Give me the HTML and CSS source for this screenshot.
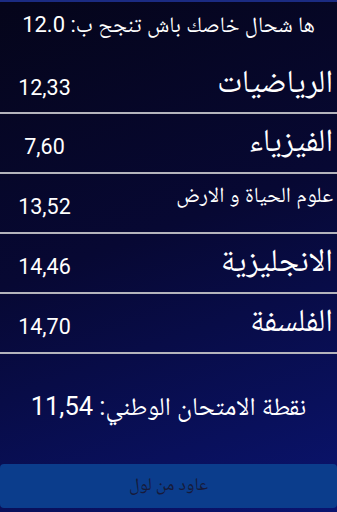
FILE: index.html
```html
<!DOCTYPE html>
<html lang="ar">
<head>
<meta name="viewport" content="width=device-width, initial-scale=1">
<link rel="stylesheet" href="styles.css">
</head>
<body>

<div class="screen">
  <h2 class="target" dir="rtl">ها شحال خاصك باش تنجح ب: 12.0</h2>

  <div class="grades">
    <div class="row">
      <div class="col-mark">12,33</div>
      <div class="col-subject" dir="rtl">الرياضيات</div>
    </div>
    <div class="row">
      <div class="col-mark">7,60</div>
      <div class="col-subject" dir="rtl">الفيزياء</div>
    </div>
    <div class="row row-small">
      <div class="col-mark">13,52</div>
      <div class="col-subject" dir="rtl">علوم الحياة و الارض</div>
    </div>
    <div class="row">
      <div class="col-mark">14,46</div>
      <div class="col-subject" dir="rtl">الانجليزية</div>
    </div>
    <div class="row">
      <div class="col-mark">14,70</div>
      <div class="col-subject" dir="rtl">الفلسفة</div>
    </div>
  </div>

  <div class="result" dir="rtl">نقطة الامتحان الوطني: 11,54</div>

  <button class="restart" type="button">عاود من لول</button>
</div>

</body>
</html>
```

FILE: styles.css
```css
* {
  box-sizing: border-box;
}

html, body {
  margin: 0;
  height: 100%;
}

body {
  font-family: Roboto, "Noto Naskh Arabic", "Noto Sans Arabic", "DejaVu Sans", sans-serif;
  color: #fff;
  background: #06061c;
}

.screen {
  height: 512px;
  display: flex;
  flex-direction: column;
  border-top: 2px solid #1b2b82;
  background: linear-gradient(160deg, #05051a 0%, #070833 45%, #0a1470 100%);
}

.target {
  margin: 0;
  height: 54px;
  padding-top: 6px;
  font-size: 22px;
  font-weight: normal;
  text-align: center;
}

.row {
  display: flex;
  align-items: center;
  height: 60px;
  border-bottom: 2px solid #b4b4bc;
}

.row:first-child {
  height: 58px;
}

.col-mark {
  width: 89px;
  text-align: center;
  font-size: 21.5px;
  padding-top: 6px;
}

.col-subject {
  flex: 1;
  text-align: right;
  padding-right: 4px;
  font-size: 32px;
  line-height: 1.2;
  padding-bottom: 6px;
}

.row-small {
  align-items: flex-start;
}

.row-small .col-mark {
  align-self: center;
}

.row-small .col-subject {
  font-size: 21.5px;
  padding-top: 8px;
}

.result {
  flex: 1;
  display: flex;
  align-items: center;
  justify-content: center;
  font-size: 25.5px;
}

.restart {
  height: 44px;
  margin: 0 0 4px;
  border: none;
  border-radius: 4px;
  background-color: #0b3d8c;
  color: #171a3a;
  font-family: "Noto Naskh Arabic", "Noto Sans Arabic", "DejaVu Sans", sans-serif;
  font-size: 18px;
}
```
